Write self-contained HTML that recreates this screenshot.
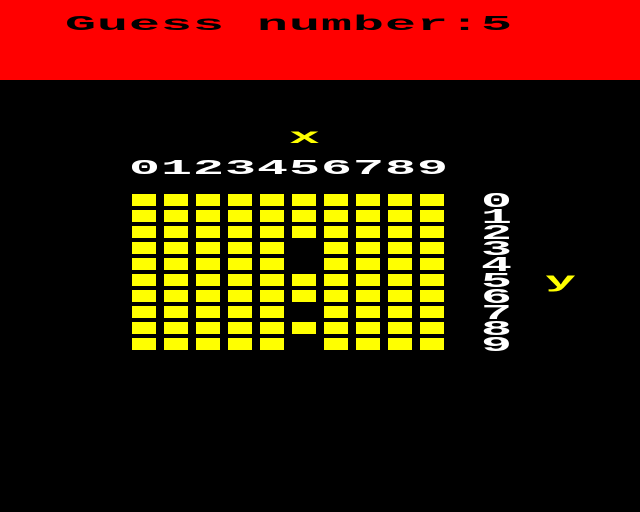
<!DOCTYPE html><html><head><style>
body{margin:0;width:640px;height:512px;background:#000;overflow:hidden;position:relative;font-family:"Liberation Mono",monospace;font-weight:bold}
.t{position:absolute;font-size:21px;line-height:16px;height:16px;white-space:pre;transform-origin:0 0;transform:scaleX(2.46)}
.b{position:absolute;width:24px;height:12px;background:#ff0}
</style></head><body>
<div style="position:absolute;left:0;top:0;width:640px;height:80px;background:#f00"></div>
<div id="v"></div>
<div id="g"></div>
<script>
var h='';
function s(str,x,y,col){for(var i=0;i<str.length;i++){if(str[i]==' ')continue;h+='<div class="t" style="left:'+(x-3+32*i)+'px;top:'+y+'px;color:'+col+'">'+str[i]+'</div>';}}
s('Guess number:5',68,18,'#000');
s('x',292,131,'#ff0');
s('0123456789',132,162,'#fff');
s('y',548,275,'#ff0');
for(var i=0;i<10;i++)s(''+i,484,195+16*i,'#fff');
document.getElementById('v').innerHTML=h;
h='';
var miss={'5,3':1,'5,4':1,'5,7':1,'5,9':1};
for(var c=0;c<10;c++)for(var r=0;r<10;r++){if(miss[c+','+r])continue;h+='<div class="b" style="left:'+(132+32*c)+'px;top:'+(194+16*r)+'px"></div>';}
document.getElementById('g').innerHTML=h;
</script>
</body></html>
